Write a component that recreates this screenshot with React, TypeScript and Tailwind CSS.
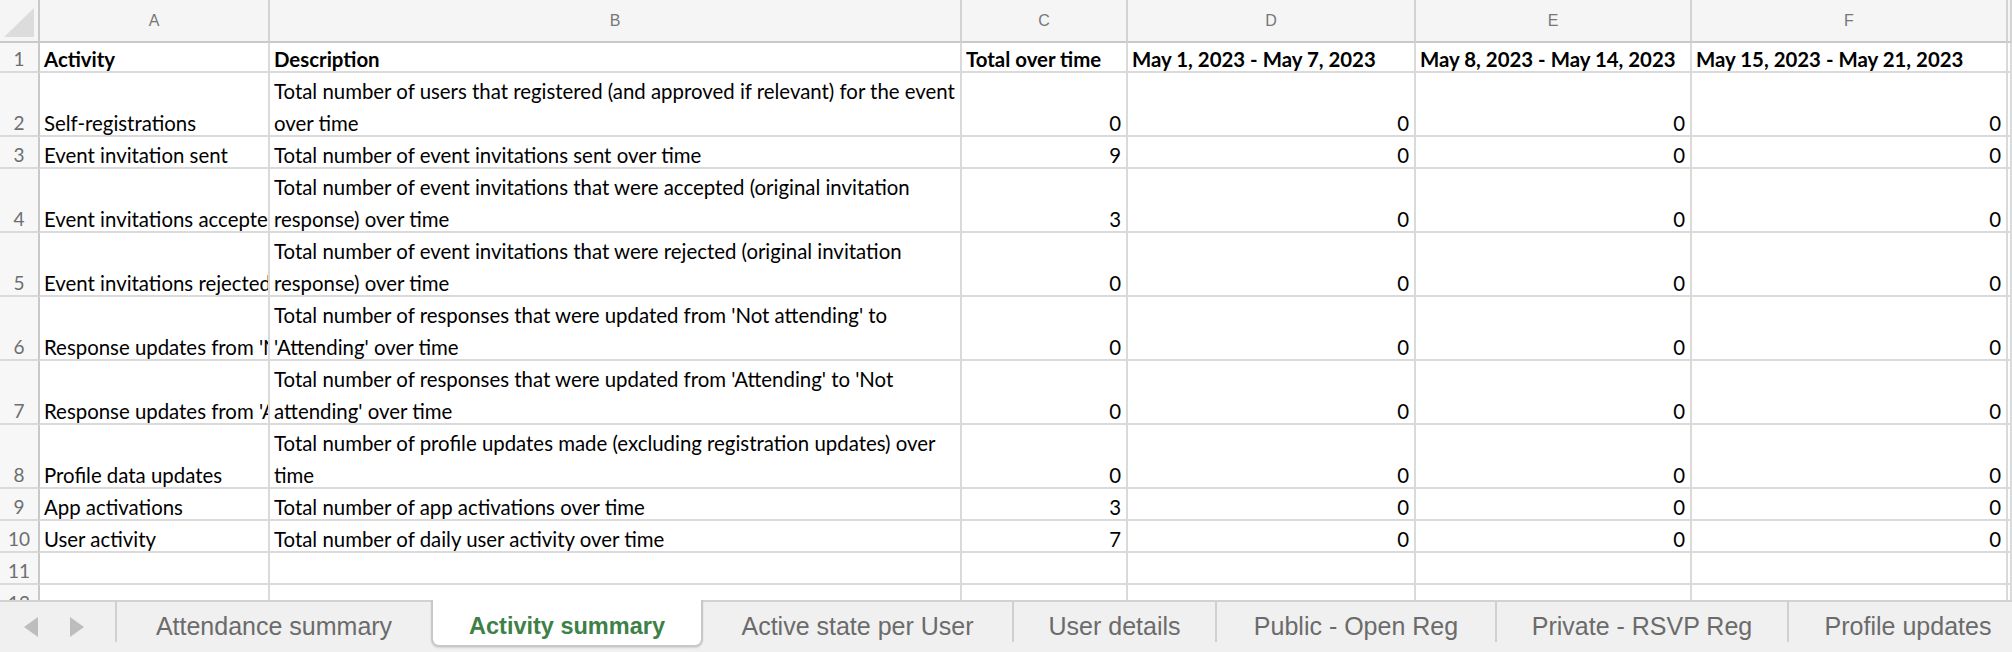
import clsx from "clsx"

type Row = {
  n: number
  a: string
  b: string[]
  v: (number | string)[]
  h: string
  bold?: boolean
}

const grid = "grid grid-cols-[40px_230px_692px_166px_288px_276px_316px_1fr]"

const rows: Row[] = [
  {
    n: 1,
    a: "Activity",
    b: ["Description"],
    v: ["Total over time", "May 1, 2023 - May 7, 2023", "May 8, 2023 - May 14, 2023", "May 15, 2023 - May 21, 2023"],
    h: "h-[30px]",
    bold: true,
  },
  {
    n: 2,
    a: "Self-registrations",
    b: ["Total number of users that registered (and approved if relevant) for the event", "over time"],
    v: [0, 0, 0, 0],
    h: "h-[64px]",
  },
  { n: 3, a: "Event invitation sent", b: ["Total number of event invitations sent over time"], v: [9, 0, 0, 0], h: "h-[32px]" },
  {
    n: 4,
    a: "Event invitations accepted",
    b: ["Total number of event invitations that were accepted (original invitation", "response) over time"],
    v: [3, 0, 0, 0],
    h: "h-[64px]",
  },
  {
    n: 5,
    a: "Event invitations rejected",
    b: ["Total number of event invitations that were rejected (original invitation", "response) over time"],
    v: [0, 0, 0, 0],
    h: "h-[64px]",
  },
  {
    n: 6,
    a: "Response updates from 'Not attending' to 'Attending'",
    b: ["Total number of responses that were updated from 'Not attending' to", "'Attending' over time"],
    v: [0, 0, 0, 0],
    h: "h-[64px]",
  },
  {
    n: 7,
    a: "Response updates from 'Attending' to 'Not attending'",
    b: ["Total number of responses that were updated from 'Attending' to 'Not", "attending' over time"],
    v: [0, 0, 0, 0],
    h: "h-[64px]",
  },
  {
    n: 8,
    a: "Profile data updates",
    b: ["Total number of profile updates made (excluding registration updates) over", "time"],
    v: [0, 0, 0, 0],
    h: "h-[64px]",
  },
  { n: 9, a: "App activations", b: ["Total number of app activations over time"], v: [3, 0, 0, 0], h: "h-[32px]" },
  { n: 10, a: "User activity", b: ["Total number of daily user activity over time"], v: [7, 0, 0, 0], h: "h-[32px]" },
  { n: 11, a: "", b: [], v: ["", "", "", ""], h: "h-[32px]" },
  { n: 12, a: "", b: [], v: ["", "", "", ""], h: "h-[32px]" },
]

const tabs = [
  { label: "Attendance summary", w: "w-[316px]" },
  { label: "Activity summary", w: "w-[272px]", active: true },
  { label: "Active state per User", w: "w-[309px]" },
  { label: "User details", w: "w-[203px]" },
  { label: "Public - Open Reg", w: "w-[280px]" },
  { label: "Private - RSVP Reg", w: "w-[292px]" },
  { label: "Profile updates", w: "w-[240px]" },
]

function Cell({ children, className }: { children?: React.ReactNode; className?: string }) {
  return (
    <div className={clsx("flex flex-col justify-end overflow-hidden border-b-2 border-r-2 border-[#dadada]", className)}>
      {children}
    </div>
  )
}

export default function App() {
  return (
    <div className="flex h-[652px] w-[2012px] flex-col overflow-hidden bg-white font-[Lato,'Noto_Sans',sans-serif] text-[20.4px] text-black">
      <div className="flex-1 overflow-hidden">
        {/* column letters */}
        <div className={clsx(grid, "h-[43px] bg-[#f5f5f5] font-['Liberation_Sans',Arial,sans-serif] text-[16px] text-[#777]")}>
          <div className="relative border-b-2 border-r-2 border-[#c9c9c9]">
            <svg className="absolute left-0 top-0" width="38" height="41" viewBox="0 0 38 41">
              <polygon points="4,37 34,8 34,37" fill="#dcdcdc" />
            </svg>
          </div>
          {["A", "B", "C", "D", "E", "F", ""].map((l, i) => (
            <div key={i} className="flex items-center justify-center border-b-2 border-r-2 border-[#d3d3d3] border-b-[#c9c9c9]">
              {l}
            </div>
          ))}
        </div>

        {rows.map((r) => (
          <div key={r.n} className={clsx(grid, r.h, r.bold && "font-bold")}>
            <Cell className="items-center border-r-[#c9c9c9] bg-[#f7f7f7] font-normal text-[19px] text-[#6e6e6e]">
              <div className="-mb-[4px] leading-[32px]">{r.n}</div>
            </Cell>
            <Cell className="pl-[4px]">
              <div className="-mb-[4px] whitespace-nowrap leading-[32px]">{r.a}</div>
            </Cell>
            <Cell className="pl-[4px]">
              <div className="-mb-[4px] leading-[32px]">
                {r.b.map((line, i) => (
                  <div key={i} className="whitespace-nowrap">
                    {line}
                  </div>
                ))}
              </div>
            </Cell>
            {r.v.map((val, i) => (
              <Cell key={i} className={clsx(r.bold ? "pl-[4px]" : "items-end pr-[5px]")}>
                <div className="-mb-[4px] whitespace-nowrap leading-[32px]">{val}</div>
              </Cell>
            ))}
            <Cell />
          </div>
        ))}
      </div>

      {/* sheet tabs */}
      <div className="flex h-[52px] shrink-0 items-start border-t-2 border-[#d2d2d2] bg-[#f0f0f0] font-['Liberation_Sans',Arial,sans-serif] text-[25px] leading-[24px] text-[#6b6b6b]">
        <div className="flex h-[40px] w-[115px] shrink-0 items-center pl-[24px] pt-[10px]">
          <svg width="60" height="20" viewBox="0 0 60 20">
            <polygon points="14,0 0,10 14,20" fill="#bdbdbd" />
            <polygon points="46,0 60,10 46,20" fill="#bdbdbd" />
          </svg>
        </div>
        {tabs.map((t, i) =>
          t.active ? (
            <div
              key={t.label}
              className={clsx(
                t.w,
                "-mt-[2px] flex h-[47px] shrink-0 justify-center whitespace-nowrap rounded-b-[8px] border-2 border-t-0 border-[#c8c8c8] bg-white pt-[14px] text-[23.5px] font-bold text-[#3d8048] shadow-[0_1px_2px_rgba(0,0,0,0.12)]",
              )}
            >
              {t.label}
            </div>
          ) : (
            <div
              key={t.label}
              className={clsx(
                t.w,
                "flex h-[40px] shrink-0 justify-center whitespace-nowrap pt-[12px]",
                !tabs[i - 1]?.active && "border-l-2 border-[#d0d0d0]",
              )}
            >
              {t.label}
            </div>
          ),
        )}
      </div>
    </div>
  )
}
